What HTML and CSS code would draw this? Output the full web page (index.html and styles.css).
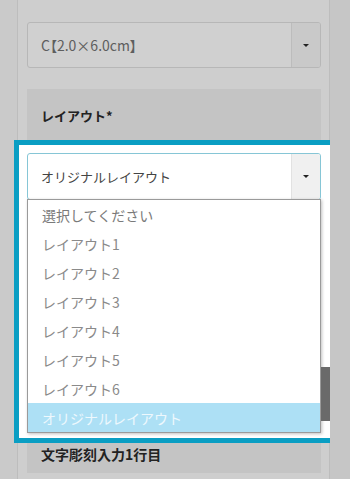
FILE: index.html
```html
<!DOCTYPE html>
<html lang="ja">
<head>
<meta charset="utf-8">
<link rel="stylesheet" href="styles.css">
</head>
<body>
<div class="page">
  <div class="panel">
    <div class="select dim">
      <span class="select-text">C【2.0×6.0cm】</span>
      <span class="select-btn"><span class="caret"></span></span>
    </div>
    <div class="label label-layout">レイアウト*</div>
    <div class="highlight">
      <div class="select focus">
        <span class="select-text">オリジナルレイアウト</span>
        <span class="select-btn"><span class="caret"></span></span>
      </div>
      <div class="combo-row">
        <ul class="dropdown">
          <li class="opt placeholder">選択してください</li>
          <li class="opt">レイアウト1</li>
          <li class="opt">レイアウト2</li>
          <li class="opt">レイアウト3</li>
          <li class="opt">レイアウト4</li>
          <li class="opt">レイアウト5</li>
          <li class="opt">レイアウト6</li>
          <li class="opt active">オリジナルレイアウト</li>
        </ul>
        <div class="side"><div class="side-block"></div></div>
      </div>
    </div>
    <div class="label label-next">文字彫刻入力1行目</div>
  </div>
  <div class="strip"></div>
</div>
</body>
</html>
```

FILE: styles.css
```css
* { box-sizing: border-box; }
html, body {
  margin: 0;
  padding: 0;
  background: #cacaca;
  font-family: "Noto Sans CJK JP", "Noto Sans", sans-serif;
}
.page {
  display: flex;
  width: 350px;
  height: 479px;
  overflow: hidden;
  padding-left: 17px;
}
.panel {
  width: 313px;
  background: #cecece;
  border-left: 1px solid #bdbdbd;
  border-right: 1px solid #bdbdbd;
  padding: 22px 8px 0 9px;
  display: flex;
  flex-direction: column;
}
.strip {
  flex: 1;
  background: #c6c6c6;
}
.select {
  display: flex;
  height: 46px;
  border-radius: 3px;
  overflow: hidden;
}
.select.dim {
  border: 1px solid #b7b7b7;
  background: #d0d0d0;
}
.select-text {
  flex: 1;
  display: flex;
  align-items: center;
  padding-left: 13px;
  font-size: 13px;
  color: #555;
}
.select.dim .select-text {
  color: #5e5e5e;
  font-size: 14px;
  font-feature-settings: "palt";
}
.select-btn {
  width: 29px;
  display: flex;
  align-items: center;
  justify-content: center;
  border-left: 1px solid #bcbcbc;
  background: #c9c9c9;
}
.caret {
  width: 0;
  height: 0;
  border-left: 3px solid transparent;
  border-right: 3px solid transparent;
  border-top: 3px solid #222;
}
.label {
  font-weight: bold;
  color: #222;
  background: #c4c4c4;
  padding-left: 14px;
}
.label-layout {
  margin-top: 21px;
  height: 51px;
  display: flex;
  align-items: center;
  font-size: 13px;
  padding-top: 2px;
}
.label-next {
  height: 30px;
  font-size: 14px;
  line-height: 20px;
  padding-top: 1px;
}
.highlight {
  margin: 0 -14px 0 -13px;
  border: 5px solid #0a9ec3;
  background: #fff;
  padding: 8px 0 5px 8px;
}
.select.focus {
  width: 294px;
  border: 1px solid #86c6d6;
  background: #fff;
  height: 47px;
}
.select.focus .select-text { color: #444; }
.select.focus .select-btn {
  background: #f0f0f0;
  border-left: 1px solid #e2e2e2;
}
.combo-row {
  display: flex;
  margin-top: -1px;
}
.dropdown {
  list-style: none;
  margin: 0;
  padding: 0;
  width: 294px;
  border: 1px solid #9a9a9a;
  background: #fff;
  box-shadow: 1px 1px 3px rgba(0,0,0,0.25);
}
.opt {
  height: 29px;
  display: flex;
  align-items: center;
  padding-left: 14px;
  font-size: 14px;
  color: #8a8a8a;
}
.opt.placeholder { color: #7a7a7a; }
.opt.active {
  background: #ade0f5;
  color: #eef8fd;
}
.side {
  width: 9px;
}
.side-block {
  margin-top: 168px;
  height: 54px;
  background: #6a6a6a;
}
```
